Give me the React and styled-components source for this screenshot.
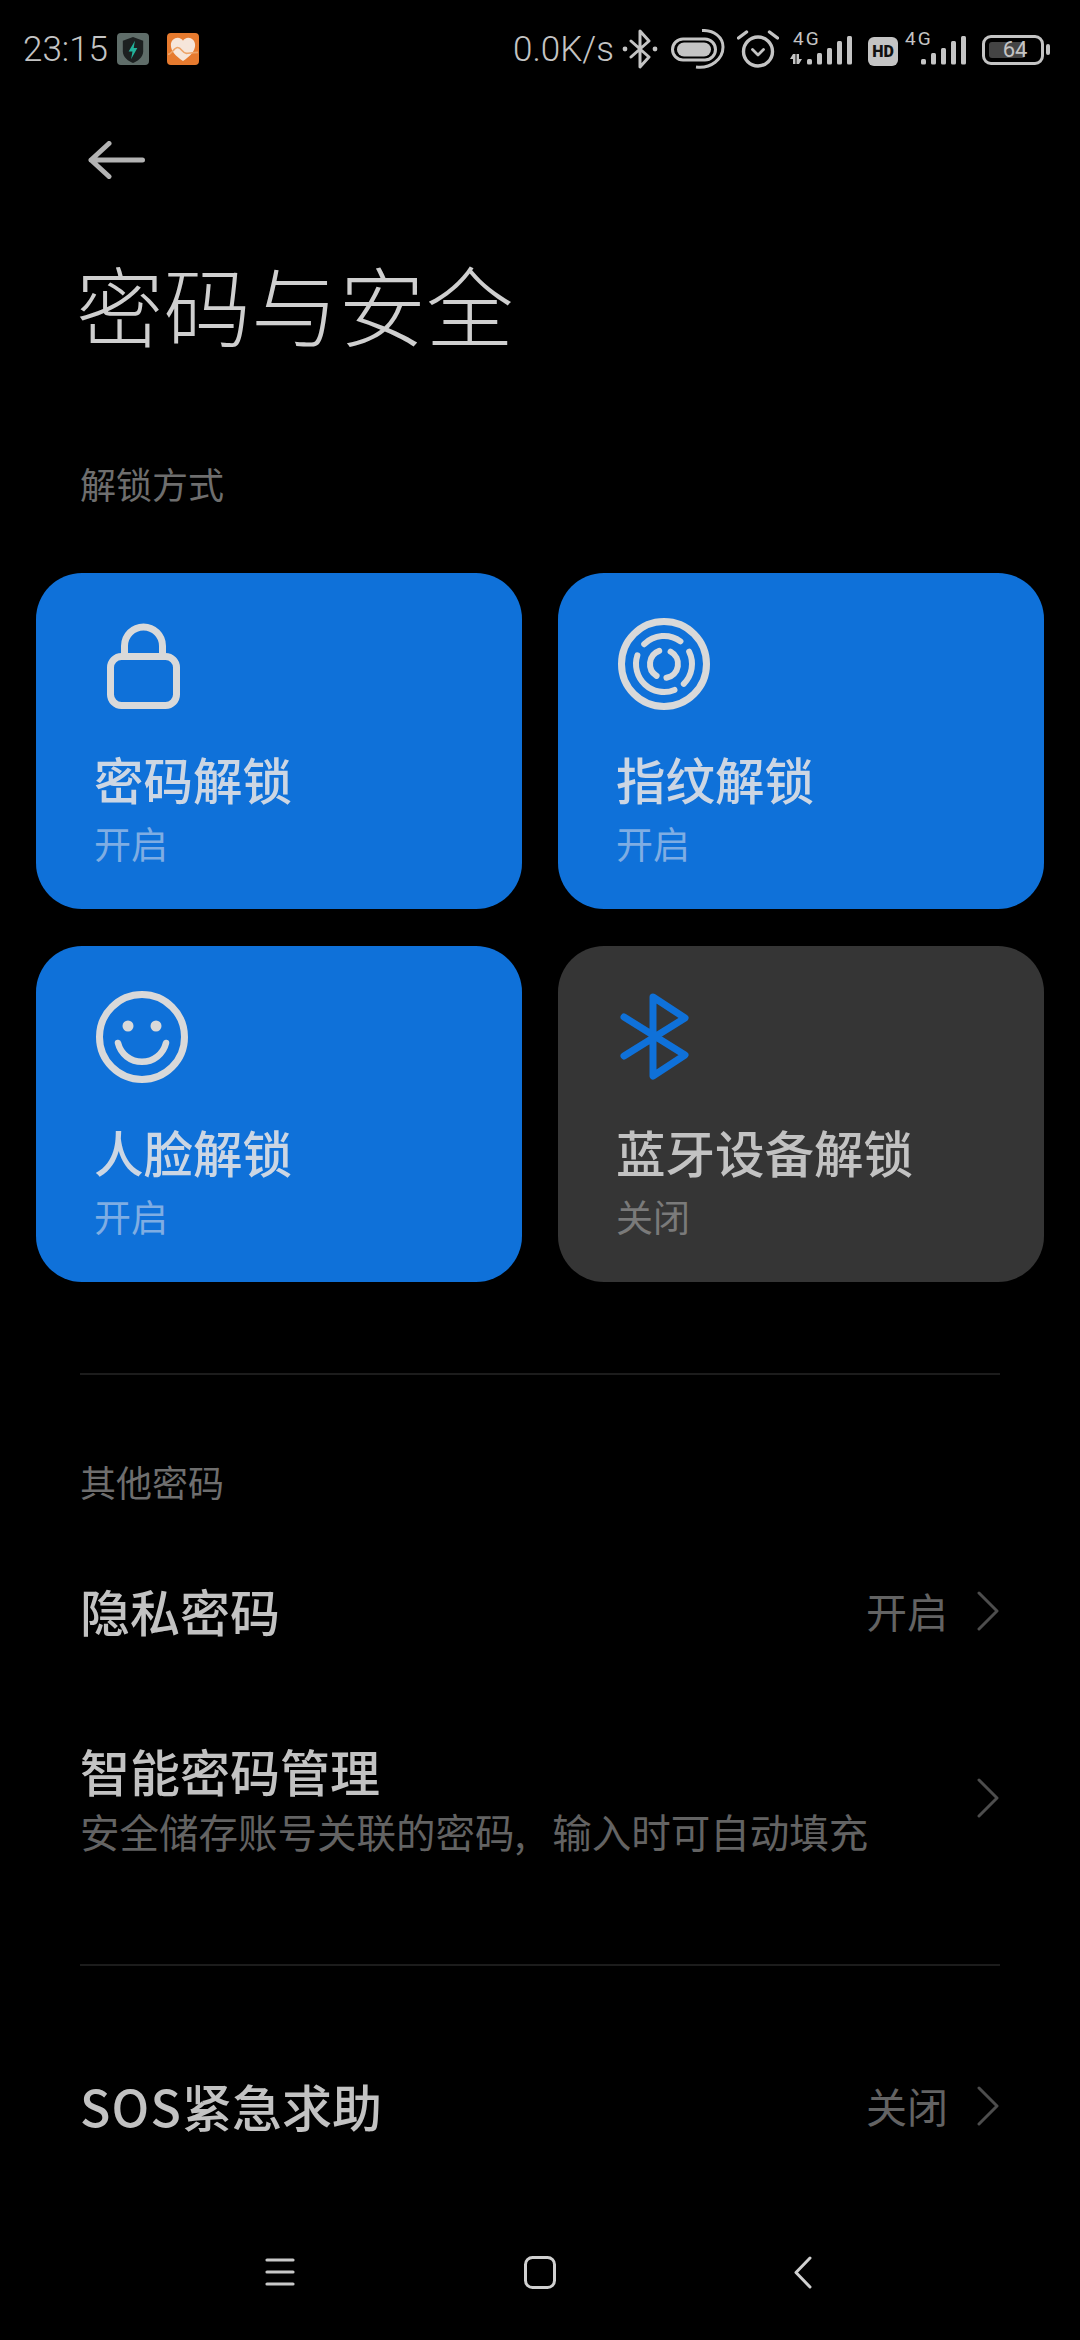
import React from "react";
import styled, { createGlobalStyle } from "styled-components";

const Global = createGlobalStyle`
  html, body { margin: 0; padding: 0; background: #000; }
  * { box-sizing: border-box; }
  #root { width: 1080px; }
`;
const CJK = `"Noto Sans CJK SC", "Noto Sans", sans-serif`;
const NUM = `Roboto, "Noto Sans", sans-serif`;

const Page = styled.div`
  width: 1080px; height: 2340px; background: #000; display: flex; flex-direction: column;
  font-family: ${CJK}; overflow: hidden;
`;
const StatusBar = styled.div`
  height: 96px; flex: none; display: flex; align-items: center; padding: 2px 30px 0 23px; color: #c4c4c4;
`;
const Clock = styled.span`
  font: 300 35px/1 ${NUM}; width: 94px;
`;
const AppBadges = styled.div` display: flex; gap: 18px; `;
const StatusRight = styled.div` margin-left: auto; display: flex; align-items: center; `;
const Speed = styled.span`
  font: 300 35px/1 ${NUM}; margin-right: 8px;
`;
const StatusGlyph = styled.svg`
  display: block; flex: none; margin-left: ${p => p.$gap || 0}px;
`;
const SignalBox = styled.div`
  position: relative; width: ${p => p.$w}px; height: 36px; margin-left: ${p => p.$gap}px; flex: none;
`;
const SignalLabel = styled.span`
  position: absolute; top: -2px; left: ${p => p.$left}px; font: 400 19px/20px ${NUM}; letter-spacing: 2px; color: #c4c4c4;
`;
const SignalBars = styled.svg`
  position: absolute; left: 0; top: 0; display: block;
`;
const HdBadge = styled.span`
  width: 30px; height: 29px; border-radius: 6px; background: #c4c4c4; color: #111; margin-left: 11px; margin-top: 5px;
  display: flex; align-items: center; justify-content: center; font: 900 16px/1 ${NUM}; flex: none;
`;
const Battery = styled.div`
  position: relative; width: 62px; height: 30px; border: 3px solid #c4c4c4; border-radius: 9px; margin-left: 14px; margin-top: 1px;
  display: flex; align-items: center; justify-content: center; font: 400 22px/1 ${NUM}; color: #c4c4c4; flex: none;
`;
const BatteryFill = styled.span`
  position: absolute; left: 4px; top: 4px; bottom: 4px; border-radius: 3px; background: #444;
`;
const BatteryValue = styled.span` position: relative; left: 2px; `;
const BatteryCap = styled.span`
  width: 4px; height: 11px; border-radius: 2px; background: #c4c4c4; margin-left: 2px; margin-top: 1px; flex: none;
`;
const BackBar = styled.div`
  height: 128px; flex: none; display: flex; align-items: center; padding-left: 88px;
`;
const PageTitle = styled.h1`
  margin: 19px 0 0; padding-left: 76px; font: 300 87.5px/120px ${CJK}; color: #cfcfcf; flex: none;
`;
const SectionLabel = styled.div`
  margin-top: ${p => p.$top}px; padding-left: 80px; font: 400 36px/50px ${CJK}; color: #6e6e6e; flex: none;
`;
const CardGrid = styled.div`
  margin-top: 65px; padding: 0 36px; display: grid; grid-template-columns: 486px 486px; grid-auto-rows: 336px;
  column-gap: 36px; row-gap: 37px; flex: none;
`;
const Card = styled.div`
  border-radius: 46px; padding: 45px 0 0 60px; background: ${p => (p.$on ? "#0f71d9" : "#353535")};
  display: flex; flex-direction: column;
`;
const IconBox = styled.svg` display: block; width: 92px; height: 92px; flex: none; `;
const CardTitle = styled.div`
  margin: 37px 0 0 -2px; font: 500 49.5px/64px ${CJK}; color: ${p => (p.$on ? "#ccd6e3" : "#c2c2c2")};
`;
const CardState = styled.div`
  margin: 7px 0 0 -2px; font: 400 37px/50px ${CJK}; color: ${p => (p.$on ? "#7fade3" : "#7a7a7a")};
`;
const Divider = styled.div`
  height: 2px; margin: ${p => p.$top}px 80px 0; background: #1c1c1c; flex: none;
`;
const Row = styled.div`
  margin-top: ${p => p.$top}px; height: ${p => p.$h}px; padding: 0 81px 0 80px; display: flex; align-items: center; flex: none;
`;
const RowText = styled.div` flex: 1; min-width: 0; padding-bottom: 3px; `;
const RowTitle = styled.div` font: 500 50px/68px ${CJK}; color: #c2c2c2; `;
const Latin = styled.span` letter-spacing: 1.2px; `;
const RowSub = styled.div` font: 400 39.5px/54px ${CJK}; color: #636363; white-space: nowrap; word-spacing: 18px; `;
const RowValue = styled.span` font: 400 41px/54px ${CJK}; color: #636363; margin-right: 29px; padding-bottom: 3px; `;
const NavBar = styled.div`
  margin-top: auto; height: 136px; flex: none; display: flex; align-items: center;
  padding-left: 265px;
`;

const polar = (r, deg) => {
  const a = (deg * Math.PI) / 180;
  return [46 + r * Math.sin(a), 46 - r * Math.cos(a)];
};
const arc = (r, a0, a1) => {
  const [x0, y0] = polar(r, a0);
  const [x1, y1] = polar(r, a1);
  const large = Math.abs(a1 - a0) > 180 ? 1 : 0;
  const sweep = a1 > a0 ? 1 : 0;
  return `M${x0.toFixed(2)} ${y0.toFixed(2)}A${r} ${r} 0 ${large} ${sweep} ${x1.toFixed(2)} ${y1.toFixed(2)}`;
};

const LockIcon = () => (
  <IconBox viewBox="0 0 92 92" fill="none" stroke="#d9d9d9" strokeWidth="7">
    <rect x="14.5" y="38.5" width="66" height="49" rx="11" />
    <path d="M28.5 38V28A19 19 0 0 1 66.5 28V38" />
  </IconBox>
);
const FingerIcon = () => (
  <IconBox viewBox="0 0 92 92" fill="none" stroke="#d9d9d9" strokeLinecap="round">
    <circle cx="46" cy="46" r="42.5" strokeWidth="7" />
    <g strokeWidth="6">
      <path d={arc(28, -45, 36)} />
      <path d={arc(28, 64, 135)} />
      <path d={arc(28, 158, 288)} />
      <path d={arc(14, -20, -148)} />
      <path d={arc(14, 28, 170)} />
    </g>
  </IconBox>
);
const FaceIcon = () => (
  <IconBox viewBox="0 0 92 92" fill="none" stroke="#d9d9d9">
    <circle cx="46" cy="46" r="42.5" strokeWidth="7" />
    <circle cx="32" cy="35" r="5.5" fill="#d9d9d9" stroke="none" />
    <circle cx="60" cy="35" r="5.5" fill="#d9d9d9" stroke="none" />
    <path d="M22 52A24.7 24.7 0 0 0 70 52" strokeWidth="6.5" strokeLinecap="round" />
  </IconBox>
);
const BluetoothIcon = () => (
  <IconBox viewBox="0 0 92 92" fill="none" stroke="#0f71d9" strokeWidth="7" strokeLinecap="round" strokeLinejoin="round">
    <path d="M6 26L67 64L35 85V6L67 27L6 65" />
  </IconBox>
);

const ShieldBadge = () => (
  <StatusGlyph width="32" height="32" viewBox="0 0 33 33">
    <rect width="33" height="33" rx="4" fill="#5f6d69" />
    <path d="M16.5 4L27 8V19C27 25 21 29 16.5 31C12 29 6 25 6 19V8Z" fill="#1c2020" />
    <path d="M18.5 8L12 19H16L14.5 27L21 15.5H17.2Z" fill="#22b29a" />
  </StatusGlyph>
);
const HeartBadge = () => (
  <StatusGlyph width="32" height="32" viewBox="0 0 33 33">
    <rect width="33" height="33" rx="4" fill="#e67a2e" />
    <path d="M16.5 29C9 24 4 19 4 12.5C4 8 7.5 5 11 5C13.5 5 15.5 6.5 16.5 8C17.5 6.5 19.5 5 22 5C25.5 5 29 8 29 12.5C29 19 24 24 16.5 29Z" fill="#f6e6da" />
    <path d="M1 22C5 22 7 15 11 15C15 15 16 21 20 21C23 21 26 20 32 20" fill="none" stroke="#eda468" strokeWidth="1.6" />
  </StatusGlyph>
);
const BtStatus = () => (
  <StatusGlyph width="36" height="40" viewBox="0 0 36 40" fill="none" stroke="#c4c4c4" strokeWidth="3" strokeLinejoin="round" strokeLinecap="round">
    <path d="M9 12L27 28L18 38V2L27 12L9 28" />
    <circle cx="3" cy="20" r="2.4" fill="#c4c4c4" stroke="none" />
    <circle cx="33" cy="20" r="2.4" fill="#c4c4c4" stroke="none" />
  </StatusGlyph>
);
const LinkStatus = () => (
  <StatusGlyph $gap={13} width="54" height="40" viewBox="0 0 54 40" fill="none" stroke="#c4c4c4" strokeWidth="3">
    <rect x="1.5" y="10" width="43" height="21" rx="10.5" />
    <rect x="6" y="13.5" width="34" height="14" rx="7" fill="#c4c4c4" stroke="none" />
    <path d="M31 1.5C43 1 52 8 52 18C52 30 40 40 25 38" />
  </StatusGlyph>
);
const AlarmStatus = () => (
  <StatusGlyph $gap={12} width="42" height="38" viewBox="0 0 42 38" fill="none" stroke="#c4c4c4" strokeLinecap="round">
    <circle cx="21" cy="21.5" r="14.5" strokeWidth="3.4" />
    <path d="M1.5 8L9.5 2M40.5 8L32.5 2" strokeWidth="3.4" />
    <path d="M15.5 19.5L21 25L26.5 19.5" strokeWidth="2.8" strokeLinejoin="round" />
  </StatusGlyph>
);
const Bars = ({ small }) => (
  <SignalBars width="67" height="36" viewBox="0 0 67 36" fill="#c4c4c4">
    {small && <path d="M3 23L0 28H3V33H5.5V23ZM9 33L12 28H9V23H6.5V33Z" />}
    {[
      [17, 28],
      [27, 22],
      [37, 17],
      [47, 10],
      [57, 5],
    ].map(([x, y]) => (
      <rect key={x} x={x + (small ? 0 : -1)} y={y} width="5" height={33.5 - y} rx="1.5" />
    ))}
  </SignalBars>
);
const BackArrow = () => (
  <StatusGlyph width="57" height="38" viewBox="0 0 57 38" fill="none" stroke="#b3b3b3" strokeWidth="5" strokeLinecap="round" strokeLinejoin="round">
    <path d="M21 2.5L3 19L21 35.5M3 19H54.5" />
  </StatusGlyph>
);
const Chevron = () => (
  <StatusGlyph width="22" height="40" viewBox="0 0 22 40" fill="none" stroke="#4d4d4d" strokeWidth="3" strokeLinecap="round" strokeLinejoin="round">
    <path d="M2 2L20 20L2 38" />
  </StatusGlyph>
);

const cards = [
  { t: "密码解锁", s: "开启", on: true, I: LockIcon },
  { t: "指纹解锁", s: "开启", on: true, I: FingerIcon },
  { t: "人脸解锁", s: "开启", on: true, I: FaceIcon },
  { t: "蓝牙设备解锁", s: "关闭", on: false, I: BluetoothIcon },
];

export default function App() {
  return (
    <Page>
      <Global />
      <StatusBar>
        <Clock>23:15</Clock>
        <AppBadges>
          <ShieldBadge />
          <HeartBadge />
        </AppBadges>
        <StatusRight>
          <Speed>0.0K/s</Speed>
          <BtStatus />
          <LinkStatus />
          <AlarmStatus />
          <SignalBox $w={67} $gap={11}>
            <SignalLabel $left={3}>4G</SignalLabel>
            <Bars small />
          </SignalBox>
          <HdBadge>HD</HdBadge>
          <SignalBox $w={63} $gap={7}>
            <SignalLabel $left={0}>4G</SignalLabel>
            <Bars />
          </SignalBox>
          <Battery>
            <BatteryFill style={{ width: "64%" }} />
            <BatteryValue>64</BatteryValue>
          </Battery>
          <BatteryCap />
        </StatusRight>
      </StatusBar>
      <BackBar>
        <BackArrow />
      </BackBar>
      <PageTitle>密码与安全</PageTitle>
      <SectionLabel $top={95}>解锁方式</SectionLabel>
      <CardGrid>
        {cards.map(({ t, s, on, I }) => (
          <Card key={t} $on={on}>
            <I />
            <CardTitle $on={on}>{t}</CardTitle>
            <CardState $on={on}>{s}</CardState>
          </Card>
        ))}
      </CardGrid>
      <Divider $top={91} />
      <SectionLabel $top={81}>其他密码</SectionLabel>
      <Row $top={21} $h={168}>
        <RowText>
          <RowTitle>隐私密码</RowTitle>
        </RowText>
        <RowValue>开启</RowValue>
        <Chevron />
      </Row>
      <Row $top={0} $h={206}>
        <RowText>
          <RowTitle>智能密码管理</RowTitle>
          <RowSub>安全储存账号关联的密码, 输入时可自动填充</RowSub>
        </RowText>
        <Chevron />
      </Row>
      <Divider $top={63} />
      <Row $top={56} $h={168}>
        <RowText>
          <RowTitle><Latin>SOS</Latin>紧急求助</RowTitle>
        </RowText>
        <RowValue>关闭</RowValue>
        <Chevron />
      </Row>
      <NavBar>
        <StatusGlyph width="30" height="28" viewBox="0 0 30 28" fill="none" stroke="#c8c8c8" strokeWidth="3.2" strokeLinecap="round">
          <path d="M2 2H28M2 14H28M2 26H28" />
        </StatusGlyph>
        <StatusGlyph $gap={229} width="32" height="33" viewBox="0 0 32 33" fill="none" stroke="#d0d0d0" strokeWidth="3">
          <rect x="1.5" y="1.5" width="29" height="30" rx="7" />
        </StatusGlyph>
        <StatusGlyph $gap={238} width="18" height="33" viewBox="0 0 18 33" fill="none" stroke="#d0d0d0" strokeWidth="3" strokeLinecap="round" strokeLinejoin="round">
          <path d="M16 2L2 16.5L16 31" />
        </StatusGlyph>
      </NavBar>
    </Page>
  );
}
